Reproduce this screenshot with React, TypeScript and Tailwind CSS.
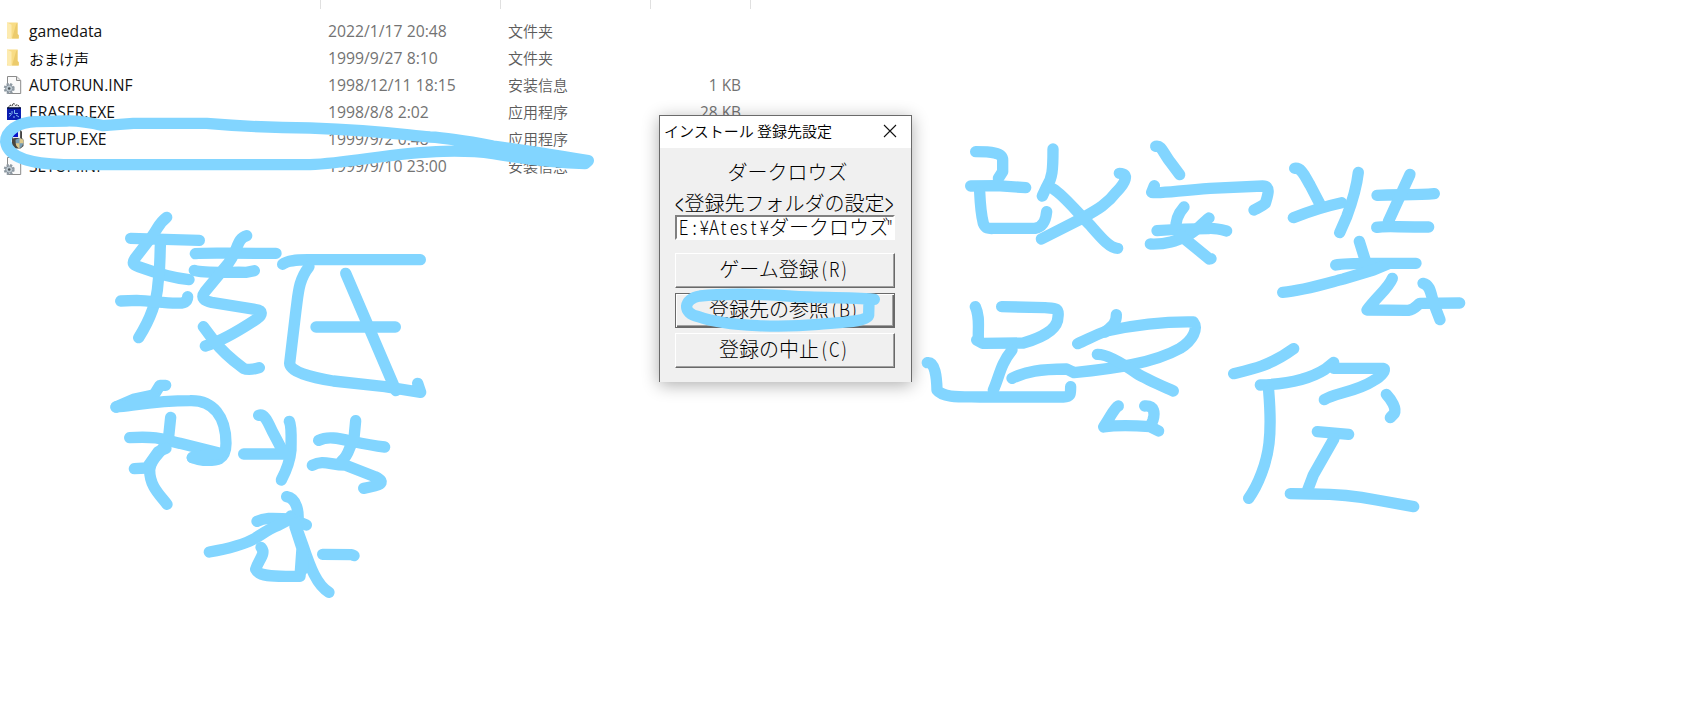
import type { ReactNode } from "react";

type Kind = "folder" | "inf" | "eraser" | "setup";

interface FileRow {
  name: string;
  date: string;
  type: string;
  size: string;
  kind: Kind;
}

const files: FileRow[] = [
  { name: "gamedata", date: "2022/1/17 20:48", type: "文件夹", size: "", kind: "folder" },
  { name: "おまけ声", date: "1999/9/27 8:10", type: "文件夹", size: "", kind: "folder" },
  { name: "AUTORUN.INF", date: "1998/12/11 18:15", type: "安装信息", size: "1 KB", kind: "inf" },
  { name: "ERASER.EXE", date: "1998/8/8 2:02", type: "应用程序", size: "28 KB", kind: "eraser" },
  { name: "SETUP.EXE", date: "1999/9/2 0:48", type: "应用程序", size: "", kind: "setup" },
  { name: "SETUP.INF", date: "1999/9/10 23:00", type: "安装信息", size: "", kind: "inf" },
];

function FileIcon({ kind }: { kind: Kind }) {
  if (kind === "folder") {
    return (
      <svg width="24" height="20" viewBox="0 0 24 20">
        <path d="M7 .5h10.500V12l1.200 1v3.500H7z" fill="#f8dc85" />
        <path d="M16 2.500l1.500-2v11.500l1.200 1.200v3.300H12z" fill="#eccb6c" />
        <path d="M7 .5l4.500 2.300v14.400L7 15.500z" fill="#fdebb0" />
      </svg>
    );
  }
  if (kind === "inf") {
    return (
      <svg width="24" height="20" viewBox="0 0 24 20">
        <path d="M7.500.5h9.200l4 3.800v13.200H7.500z" fill="#fafafa" stroke="#8b8b8b" />
        <path d="M16.500.5v4h4" fill="#e4e4e4" stroke="#8b8b8b" />
        <circle cx="9.200" cy="12.500" r="4.500" fill="none" stroke="#8f9aa3" strokeWidth="2" strokeDasharray="2.200 1.400" />
        <circle cx="9.200" cy="12.500" r="3.600" fill="#bcc8d0" stroke="#7c8790" strokeWidth=".8" />
        <circle cx="9.200" cy="12.500" r="1.300" fill="#4c5459" />
      </svg>
    );
  }
  if (kind === "eraser") {
    return (
      <svg width="24" height="20" viewBox="0 0 24 20">
        <path d="M8 5l2-3 2 1 1.500-3 2 2.500 2-1 3 4" fill="#f2f2f2" stroke="#222" strokeWidth="1" strokeDasharray="2 1" />
        <path d="M7 5h14v12H7z" fill="#0a1cb0" />
        <path d="M7 5h14" stroke="#061040" strokeWidth="1.500" />
        <path d="M14.500 7v3.500h3.500M12 8v2.500l-2.500 3M16 12l3 2M9 10.500h2M13 14h2" stroke="#7fb5ee" fill="none" />
      </svg>
    );
  }
  return (
    <svg width="24" height="20" viewBox="0 0 24 20" className="overflow-visible">
      <path d="M12.500-1h8v10h-8z" fill="#e8e8ee" stroke="#444" strokeWidth=".8" />
      <path d="M13 .5h5V7h-5z" fill="#0713c8" />
      <path d="M20.500 0l1.500 1.500v6.500l-1.500 1z" fill="#444" />
      <path d="M12 9l3-1h7l1.500 2v6l-3 2.500h-6l-2.500-3z" fill="#4a463e" />
      <path d="M19.500 8l4 1.800c0 4.500-1 7.200-4 8.700-3-1.500-4-4.200-4-8.700z" fill="#7a9fb5" />
      <path d="M19.500 8l4 1.800v3.400h-4zM15.700 13.200h3.800v5.300c-2.300-1.200-3.500-2.800-3.800-5.300z" fill="#dcc88c" />
    </svg>
  );
}

function FileList() {
  return (
    <div className="w-[751px] font-['Open_Sans','Noto_Sans_CJK_SC',sans-serif] text-[15px] text-[#737373]">
      <div className="flex h-[9px]">
        <div className="w-[321px] border-r border-[#e0e0e0]" />
        <div className="w-[180px] border-r border-[#e0e0e0]" />
        <div className="w-[150px] border-r border-[#e0e0e0]" />
        <div className="w-[100px] border-r border-[#e0e0e0]" />
      </div>
      <div className="pt-[9px]">
        {files.map((f) => (
          <div key={f.name} className="flex h-[27px] items-center whitespace-nowrap leading-[27px]">
            <div className="flex w-[29px] shrink-0">
              <FileIcon kind={f.kind} />
            </div>
            <div
              className={
                f.name === "おまけ声"
                  ? "w-[299px] pb-[1px] font-['Noto_Sans_CJK_JP',sans-serif] font-[350] leading-[25px] text-black"
                  : "w-[299px] text-[15.7px] text-[#111]"
              }
            >
              {f.name}
            </div>
            <div className="w-[180px] text-[15.75px]">{f.date}</div>
            <div className="w-[133px] pb-[2px] font-['Noto_Sans_CJK_SC',sans-serif] font-[350] leading-[25px] text-[#5c5c5c]">{f.type}</div>
            <div className="w-[100px] text-right text-[15.4px]">{f.size}</div>
          </div>
        ))}
      </div>
    </div>
  );
}

/* Half-width characters: every cell is 10px wide beside the 20px kana. */
function Half({ children, tall = false }: { children: string; tall?: boolean }) {
  return (
    <span className="inline-flex">
      {children.split("").map((c, i) => (
        <span key={i} className="flex w-[10px] justify-center">
          <span className={tall ? "inline-block scale-x-[0.75] scale-y-[1.7]" : "inline-block scale-x-[0.85]"}>{c}</span>
        </span>
      ))}
    </span>
  );
}

function PushButton({ children, focused = false }: { children: ReactNode; focused?: boolean }) {
  return (
    <button
      className={
        focused
          ? "flex h-[35px] w-[220px] items-center justify-center border border-[#696969] bg-[#f0f0f0] pb-[4px] pr-[2px] shadow-[inset_1px_1px_0_#fff,inset_-1px_-1px_0_#696969,inset_-2px_-2px_0_#a0a0a0]"
          : "flex h-[35px] w-[220px] items-center justify-center border border-b-[#696969] border-l-white border-r-[#696969] border-t-white bg-[#f0f0f0] pb-[4px] pr-[2px] shadow-[inset_-1px_-1px_0_#a0a0a0]"
      }
    >
      {children}
    </button>
  );
}

function InstallDialog() {
  return (
    <div className="absolute left-[659px] top-[115px] h-[267px] w-[253px] border border-b-0 border-[#6a6a6a] bg-[#f0f0f0] font-['Noto_Sans_CJK_JP',sans-serif] shadow-[0_3px_16px_rgba(0,0,0,0.32)]">
      <div className="flex h-[32px] items-center justify-between bg-white pb-[2px] pl-[4px] pr-[14px]">
        <span className="whitespace-nowrap text-[15px] font-[350] leading-[20px] text-black">インストール 登録先設定</span>
        <svg width="14" height="14" viewBox="0 0 14 14">
          <path d="M1 1l12 12M13 1L1 13" stroke="#111" strokeWidth="1.100" />
        </svg>
      </div>
      <div className="flex flex-col whitespace-nowrap pl-[15px] pt-[12px] text-[20px] font-light leading-[24px] text-black">
        <div className="w-[225px] text-center">ダークロウズ</div>
        <div className="mt-[6px] flex h-[25px] w-[219px] justify-center leading-[25px]">
          <Half tall>{"<"}</Half>登録先フォルダの設定<Half tall>{">"}</Half>
        </div>
        <div className="flex h-[25px] w-[220px] items-center border-2 border-b-white border-l-[#808080] border-r-white border-t-[#808080] bg-white pb-[1px] pl-[2px] leading-[20px]">
          <Half>E:¥Atest¥</Half>ダークロウズ
          <span className="-ml-[3px] inline-block w-[5px] scale-x-[0.7]">"</span>
        </div>
        <div className="mt-[13px] flex flex-col gap-[5px]">
          <PushButton>ゲーム登録<Half>(R)</Half></PushButton>
          <PushButton focused>登録先の参照<Half>(B)</Half></PushButton>
          <PushButton>登録の中止<Half>(C)</Half></PushButton>
        </div>
      </div>
    </div>
  );
}

/* Freehand marker strokes, one list for each region of the canvas. */
const ink: { at: string; strokes: string[] }[] = [
  {
    at: "translate(0 0) scale(.33333)",
    strokes: [
      "M1765 482C1660 465 1560 449 1480 438C1420 427 1350 414 1290 411C1200 403 1150 393 930 384C850 384 740 380 620 370L400 370L310 377C280 370 230 362 200 363L110 365C50 366 17 395 17 425C22 460 60 490 190 494L930 494C1060 488 1180 457 1330 454C1400 452 1430 454 1480 461C1560 474 1660 488 1755 491L1765 482",
    ],
  },
  {
    at: "translate(645 100) scale(.33333)",
    strokes: ["M688 598C600 591 500 594 430 588C330 580 220 582 165 588C115 596 110 640 160 650C250 682 420 682 520 673C600 666 668 664 671 645L672 606"],
  },
  {
    at: "translate(100 200) scale(.33333)",
    strokes: [
      "M92 115L298 121",
      "M200 52C175 70 175 85 155 110L105 175C95 190 100 195 115 200C170 220 225 235 267 239",
      "M182 122C178 170 183 190 174 250C170 320 140 375 116 413",
      "M62 303L110 301C160 302 200 312 245 309C262 307 263 295 263 290",
      "M286 161C310 158 340 160 528 160",
      "M283 211C310 220 380 216 440 217L463 212",
      "M440 107C410 115 415 150 385 190L315 275C300 295 315 303 335 307L465 328C490 330 488 345 470 357C420 390 360 425 316 438",
      "M310 380L340 420C370 460 410 490 430 505C445 512 465 507 478 503",
      "M548 193C565 178 600 180 640 179L961 179",
      "M627 200C595 240 595 280 588 330L569 490C570 515 630 532 700 543L855 560L962 577L953 550",
      "M737 220L888 572",
      "M648 381L886 381",
    ],
  },
  {
    at: "translate(100 370) scale(.33333)",
    strokes: [
      "M197 46L180 46L162 75",
      "M48 111L100 88L160 75L162 92L80 104",
      "M48 111C120 103 180 92 270 92C340 90 378 140 378 220C378 275 345 272 310 271C295 270 285 266 277 263",
      "M89 203C180 197 200 212 240 220L360 250",
      "M212 142L206 200C200 240 150 260 149 300C149 350 180 375 201 403",
      "M103 296L140 294L175 245L198 235",
      "M277 263L330 253L355 252",
      "M476 136C495 130 505 160 520 190L549 245",
      "M568 154C576 170 573 210 573 240C570 275 560 300 544 330",
      "M431 252L558 252",
      "M656 211C700 190 750 220 854 231",
      "M767 152L762 205C745 235 748 255 725 273",
      "M637 286C670 268 690 285 735 285L825 320C865 340 835 347 791 355",
      "M560 380C590 385 598 425 593 460L572 438",
      "M471 454C500 440 530 446 575 447L619 465",
      "M328 546C390 535 430 525 465 505C490 490 505 478 535 466L575 445",
      "M483 532C500 550 475 570 467 598C480 625 540 618 600 619L606 535L585 470",
      "M585 460L610 530C630 590 650 645 687 667",
      "M607 600L608 535",
      "M668 553L755 554L762 557",
    ],
  },
  {
    at: "translate(920 130) scale(.33333)",
    strokes: [
      "M167 65C210 65 248 67 248 90L248 125L235 145",
      "M152 168L230 167L317 173",
      "M179 185C181 230 185 260 190 280C198 300 210 295 230 295L345 295C373 290 378 265 380 245",
      "M399 57C399 120 397 145 380 170L367 198",
      "M400 177C430 195 470 245 510 285C545 325 570 355 593 355",
      "M364 327L480 268C530 240 560 225 590 185C615 160 630 130 598 130",
      "M707 49C725 45 730 70 750 95L779 134",
      "M703 167L695 187C720 192 770 182 870 175L1028 168C1055 168 1042 200 1036 220C1025 230 1010 235 1002 240",
      "M792 231C775 250 765 270 768 300L795 312",
      "M711 302C770 298 820 296 863 296C880 293 900 298 920 303",
      "M691 342C740 344 770 332 800 318C830 305 845 280 867 264",
      "M780 315L868 387L873 386",
      "M166 530C180 560 174 590 175 625L170 630L188 640L310 639C360 625 414 600 414 560C418 533 405 535 375 533L245 530",
      "M276 745C320 723 360 718 440 717L462 728C580 716 700 700 780 655C820 630 835 595 820 576C760 575 660 582 560 603C525 615 500 630 473 641",
      "M276 660C240 705 240 735 220 780",
      "M589 554C590 580 575 590 555 606",
      "M532 673C560 672 600 695 650 730C680 748 720 765 760 783",
      "M22 698C45 695 50 740 51 780C70 805 130 800 180 801L430 801C455 800 451 790 452 770",
      "M595 828C582 835 575 855 551 891C590 885 650 887 690 890L716 903",
      "M674 828C705 826 705 850 699 870L692 888",
    ],
  },
  {
    at: "translate(1190 150) scale(.33333)",
    strokes: [
      "M314 55C335 52 345 80 360 105L395 172",
      "M310 203C360 183 400 170 455 158",
      "M505 67C500 110 485 160 470 200L449 248",
      "M561 136C620 133 680 136 733 131",
      "M660 73L595 215",
      "M560 232C580 228 610 231 716 231",
      "M508 274L527 335",
      "M437 345C470 338 500 341 678 340",
      "M278 427C340 422 410 400 460 387L550 360L595 341",
      "M607 385C595 415 560 440 531 480L655 481C675 478 680 465 690 460L809 459",
      "M699 400C725 405 722 440 735 470L750 509",
    ],
  },
  {
    at: "translate(1210 330) scale(.33333)",
    strokes: [
      "M251 56C225 75 190 95 155 108C130 117 100 124 71 131",
      "M151 165C250 162 310 140 345 118L371 97",
      "M371 115L520 115C530 118 515 140 490 152C440 185 370 190 343 209",
      "M176 182C180 230 184 280 177 340C170 400 145 465 116 505",
      "M529 193C545 210 560 235 553 250L541 263",
      "M322 305L416 313",
      "M372 326L310 435L293 480",
      "M241 491L310 492C380 492 450 500 500 510L611 530",
    ],
  },
];

function Ink() {
  return (
    <svg className="pointer-events-none absolute left-0 top-0" width="1694" height="726" viewBox="0 0 1694 726">
      {ink.map((g) => (
        <g key={g.at} transform={g.at} fill="none" stroke="#82d5ff" strokeWidth="34" strokeLinecap="round" strokeLinejoin="round">
          {g.strokes.map((d) => (
            <path key={d} d={d} />
          ))}
        </g>
      ))}
    </svg>
  );
}

export default function App() {
  return (
    <div className="relative h-[726px] w-[1694px] overflow-hidden bg-white">
      <FileList />
      <InstallDialog />
      <Ink />
    </div>
  );
}
